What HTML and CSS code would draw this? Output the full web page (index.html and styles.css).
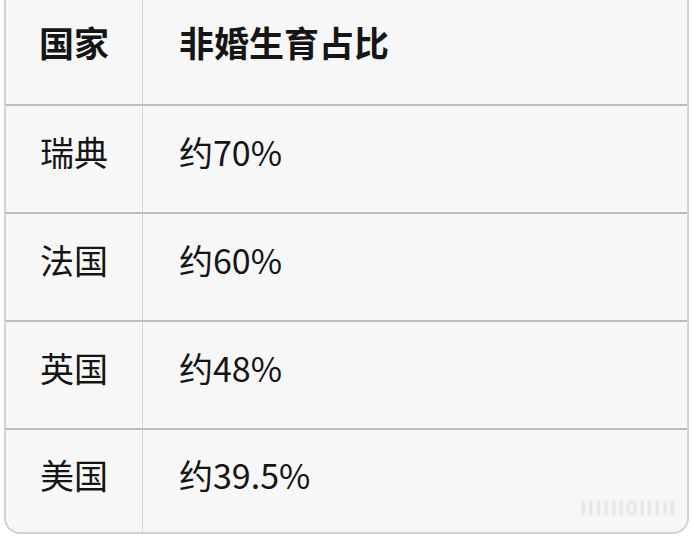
FILE: index.html
```html
<!DOCTYPE html>
<html lang="zh">
<head>
<meta charset="utf-8">
<link rel="stylesheet" href="styles.css">
</head>
<body>
<div class="table">
  <div class="row head">
    <div class="c1">国家</div>
    <div class="c2">非婚生育占比</div>
  </div>
  <div class="row">
    <div class="c1">瑞典</div>
    <div class="c2">约70%</div>
  </div>
  <div class="row">
    <div class="c1">法国</div>
    <div class="c2">约60%</div>
  </div>
  <div class="row">
    <div class="c1">英国</div>
    <div class="c2">约48%</div>
  </div>
  <div class="row last">
    <div class="c1">美国</div>
    <div class="c2">约39.5%</div>
  </div>
  <div class="mark">IIIIII0IIIII</div>
</div>
</body>
</html>
```
FILE: styles.css
```css
html, body {
  margin: 0;
  padding: 0;
  background: #ffffff;
}
body {
  width: 693px;
  height: 536px;
  overflow: hidden;
  font-family: "Noto Sans CJK SC", "Noto Sans", sans-serif;
  color: #151515;
}
.table {
  position: relative;
  margin: 0 4px;
  height: 534px;
  box-sizing: border-box;
  background: #f7f7f7;
  border-left: 2px solid #d2d2d2;
  border-right: 2px solid #d2d2d2;
  border-bottom: 2px solid #d2d2d2;
  border-radius: 0 0 16px 16px;
  overflow: hidden;
}
.row {
  display: grid;
  grid-template-columns: 137px 1fr;
  height: 108px;
  border-top: 2px solid #bcbcbc;
  box-sizing: border-box;
  font-size: 34px;
  line-height: 1;
}
.row.head {
  height: 104px;
  border-top: none;
  font-weight: 700;
  font-size: 35px;
}
.row.last {
  height: 110px;
}
.c1, .c2 {
  display: flex;
  align-items: center;
  box-sizing: border-box;
  padding-bottom: 14px;
}
.row.head .c1, .row.head .c2 {
  padding-bottom: 22px;
}
.row.last .c1, .row.last .c2 {
  padding-bottom: 18px;
}
.c1 {
  justify-content: center;
  border-right: 1px solid #d6d6d6;
}
.c2 {
  padding-left: 36px;
}
.mark {
  position: absolute;
  right: 10px;
  bottom: 12px;
  font-family: "Liberation Sans", sans-serif;
  font-size: 20px;
  letter-spacing: 2px;
  color: #d8d8d8;
  filter: blur(0.8px);
}
```
